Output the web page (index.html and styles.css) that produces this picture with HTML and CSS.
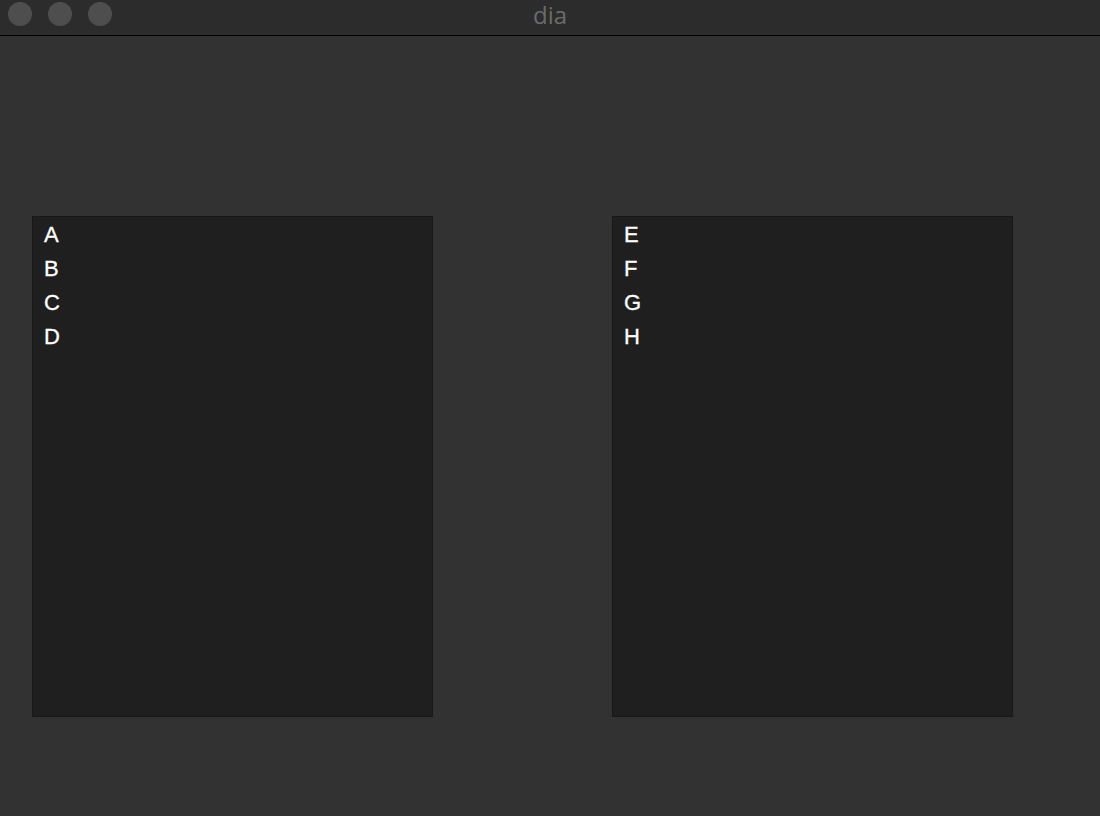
FILE: index.html
```html
<!DOCTYPE html>
<html>
<head>
    <title>dia</title>
    <link rel="stylesheet" href="styles.css">
</head>
<body>
    <div class="titlebar">
        <div class="lights">
            <span class="light"></span>
            <span class="light"></span>
            <span class="light"></span>
        </div>
        <div class="title">dia</div>
    </div>
    <div class="content">
        <ul class="list">
            <li>A</li>
            <li>B</li>
            <li>C</li>
            <li>D</li>
        </ul>
        <ul class="list">
            <li>E</li>
            <li>F</li>
            <li>G</li>
            <li>H</li>
        </ul>
    </div>
</body>
</html>
```
FILE: styles.css
```css
body {
    margin: 0;
    height: 100vh;
    background-color: #323232;
    font-family: "Liberation Sans", Arial, sans-serif;
    overflow: hidden;
}

.titlebar {
    position: relative;
    height: 35px;
    background-color: #2c2c2c;
    border-bottom: 1px solid #000000;
}

.lights {
    display: flex;
    gap: 16px;
    padding: 2px 0 0 8px;
}

.light {
    width: 24px;
    height: 24px;
    border-radius: 50%;
    background-color: #4e4e4e;
}

.title {
    position: absolute;
    top: 0;
    left: 0;
    right: 0;
    text-align: center;
    line-height: 30px;
    font-family: "Open Sans", sans-serif;
    font-size: 24px;
    color: #6b6b6b;
}

.content {
    display: flex;
    gap: 179px;
    padding: 180px 0 0 32px;
}

.list {
    list-style: none;
    margin: 0;
    width: 388px;
    height: 498px;
    padding: 1px 0 0 11px;
    background-color: #1f1f1f;
    border: 1px solid #181818;
}

.list li {
    color: #ffffff;
    font-size: 22px;
    line-height: 34px;
    -webkit-text-stroke: 0.3px #ffffff;
}
```
